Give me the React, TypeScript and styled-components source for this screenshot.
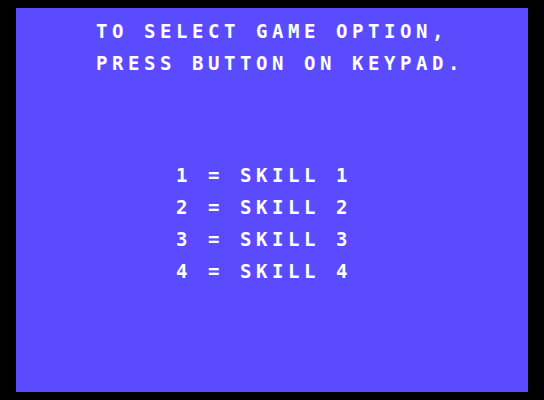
import styled, { createGlobalStyle } from "styled-components";

// one character cell on the doubled 256x192 screen
const CELL = 16;

const GlobalStyle = createGlobalStyle`
  html, body {
    margin: 0;
    padding: 0;
    background: #000;
  }
`;

const titleLines = ["TO SELECT GAME OPTION,", "PRESS BUTTON ON KEYPAD."];
const skills = [1, 2, 3, 4];

export default function App() {
  return (
    <>
      <GlobalStyle />
      <Screen>
        <Display>
          <Block $indent={5} $top={CELL}>
            {titleLines.map((line, i) => (
              <Line key={i}>{line}</Line>
            ))}
          </Block>
          <Block $indent={10} $top={CELL * 5}>
            {skills.map((n) => (
              <Line key={n}>{`${n} = SKILL ${n}`}</Line>
            ))}
          </Block>
        </Display>
      </Screen>
    </>
  );
}

const Screen = styled.div`
  width: 544px;
  height: 400px;
  padding: 8px 16px;
  box-sizing: border-box;
  background: #000;
`;

const Display = styled.div`
  width: 512px;
  height: 384px;
  background: #5a4bff;
  display: flex;
  flex-direction: column;
  overflow: hidden;
`;

const Block = styled.div<{ $indent: number; $top: number }>`
  display: flex;
  flex-direction: column;
  padding-left: ${(p) => p.$indent * CELL}px;
  margin-top: ${(p) => p.$top}px;
`;

const Line = styled.div`
  height: ${CELL * 2}px;
  line-height: ${CELL - 2}px;
  font-family: "DejaVu Sans Mono", "Liberation Mono", monospace;
  font-size: 19px;
  font-weight: bold;
  letter-spacing: 4.56px;
  color: #fff;
  white-space: pre;
`;
